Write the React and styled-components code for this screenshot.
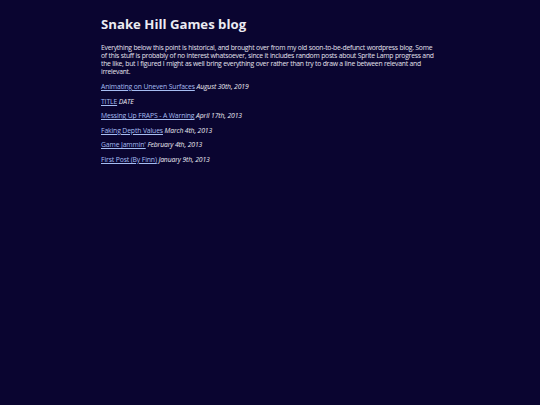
import React from "react";
import styled, { createGlobalStyle } from "styled-components";

const Global = createGlobalStyle`
  html, body {
    margin: 0;
    padding: 0;
    background: #0a0530;
  }
  body {
    min-height: 405px;
    font-family: "Open Sans", "Noto Sans", sans-serif;
    color: #e4e2ee;
  }
`;

const Page = styled.main`
  max-width: 338px;
  margin: 0 auto;
  padding-top: 14px;
`;

const Title = styled.h1`
  font-size: 13.2px;
  line-height: 20px;
  font-weight: 700;
  margin: 0 0 10px;
  color: #ecebf2;
`;

const Intro = styled.p`
  font-size: 6.8px;
  line-height: 8px;
  letter-spacing: -0.26px;
  word-spacing: 0.2px;
  margin: 0 0 7px;
`;

const PostRow = styled.p`
  font-size: 6.8px;
  line-height: 8px;
  letter-spacing: -0.12px;
  margin: 0 0 6.6px;
`;

const PostLink = styled.a`
  color: #a6bdf2;
  text-decoration: underline;
`;

const PostDate = styled.em`
  font-style: italic;
  color: #ecebf2;
`;

const posts = [
  { title: "Animating on Uneven Surfaces", date: "August 30th, 2019" },
  { title: "TITLE", date: "DATE" },
  { title: "Messing Up FRAPS - A Warning", date: "April 17th, 2013" },
  { title: "Faking Depth Values", date: "March 4th, 2013" },
  { title: "Game Jammin'", date: "February 4th, 2013" },
  { title: "First Post (By Finn)", date: "January 9th, 2013" },
];

export default function App() {
  return (
    <>
      <Global />
      <Page>
        <Title>Snake Hill Games blog</Title>
        <Intro>
          Everything below this point is historical, and brought over from my old
          soon-to-be-defunct wordpress blog. Some of this stuff is probably of no
          interest whatsoever, since it includes random posts about Sprite Lamp
          progress and the like, but I figured I might as well bring everything
          over rather than try to draw a line between relevant and irrelevant.
        </Intro>
        {posts.map((p) => (
          <PostRow key={p.title}>
            <PostLink href="#">{p.title}</PostLink> <PostDate>{p.date}</PostDate>
          </PostRow>
        ))}
      </Page>
    </>
  );
}
